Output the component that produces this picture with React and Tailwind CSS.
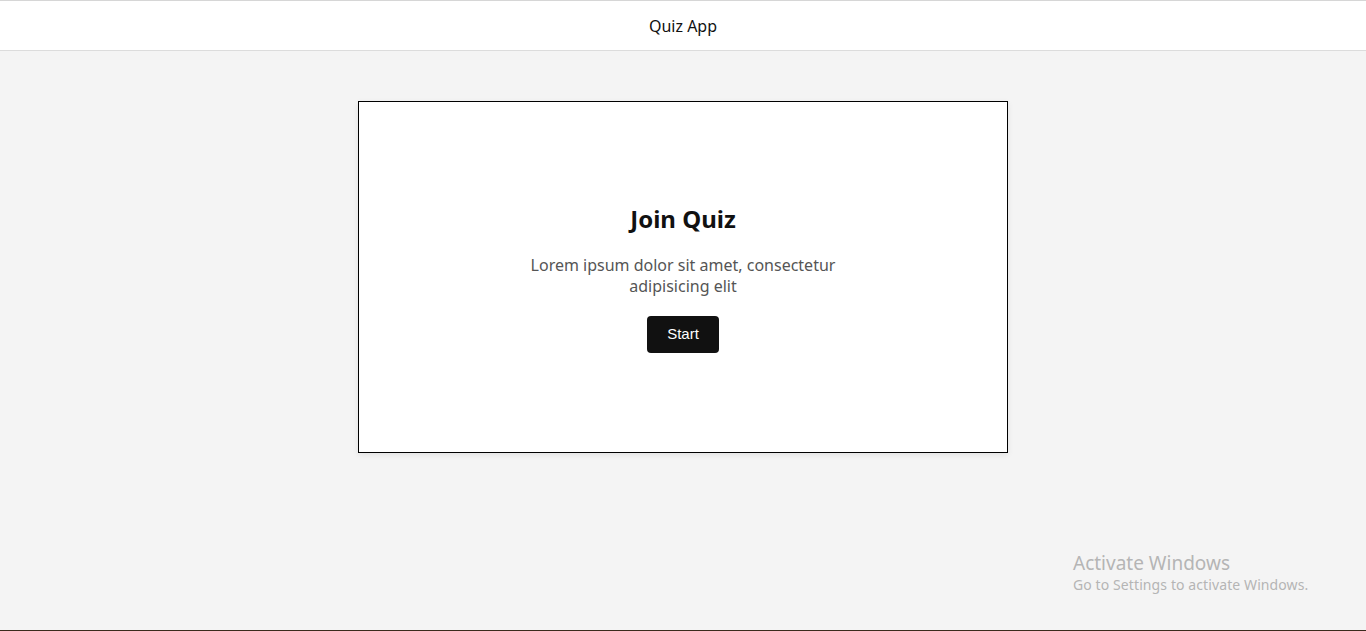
export default function App() {
  return (
    <div className="relative min-h-[631px] h-[631px] bg-[#f4f4f4] flex flex-col overflow-hidden" style={{ fontFamily: '"Noto Sans", "Open Sans", sans-serif' }}>
      <header className="h-[51px] shrink-0 bg-white border-t border-b border-t-[#d6d6d6] border-b-[#dcdcdc] flex items-center justify-center">
        <span className="text-[16px] text-[#111]">Quiz App</span>
      </header>
      <main className="flex-1 flex justify-center pt-[50px]">
        <div className="w-[650px] h-[352px] bg-white border border-black shadow-[0_2px_6px_rgba(0,0,0,0.08)] flex flex-col items-center justify-center pt-[2px]">
          <h1 className="text-[24px] font-bold text-[#111] leading-[32px]">Join Quiz</h1>
          <p className="mt-[20px] max-w-[330px] text-center text-[16px] leading-[21px] text-[#555]">
            Lorem ipsum dolor sit amet, consectetur adipisicing elit
          </p>
          <button className="mt-[19px] w-[72px] h-[37px] rounded-[4px] bg-[#111] text-white text-[15px]" style={{ fontFamily: '"Liberation Sans", Arial, sans-serif' }}>
            Start
          </button>
        </div>
      </main>
      <div className="h-px shrink-0 bg-[#3a2a1c]" />
      <div className="absolute left-[1073px] top-[551px] text-[#b5b5b5] pointer-events-none">
        <div className="text-[19px] leading-[24px]">Activate Windows</div>
        <div className="text-[14px] leading-[20px] tracking-[0.1px]">Go to Settings to activate Windows.</div>
      </div>
    </div>
  );
}
